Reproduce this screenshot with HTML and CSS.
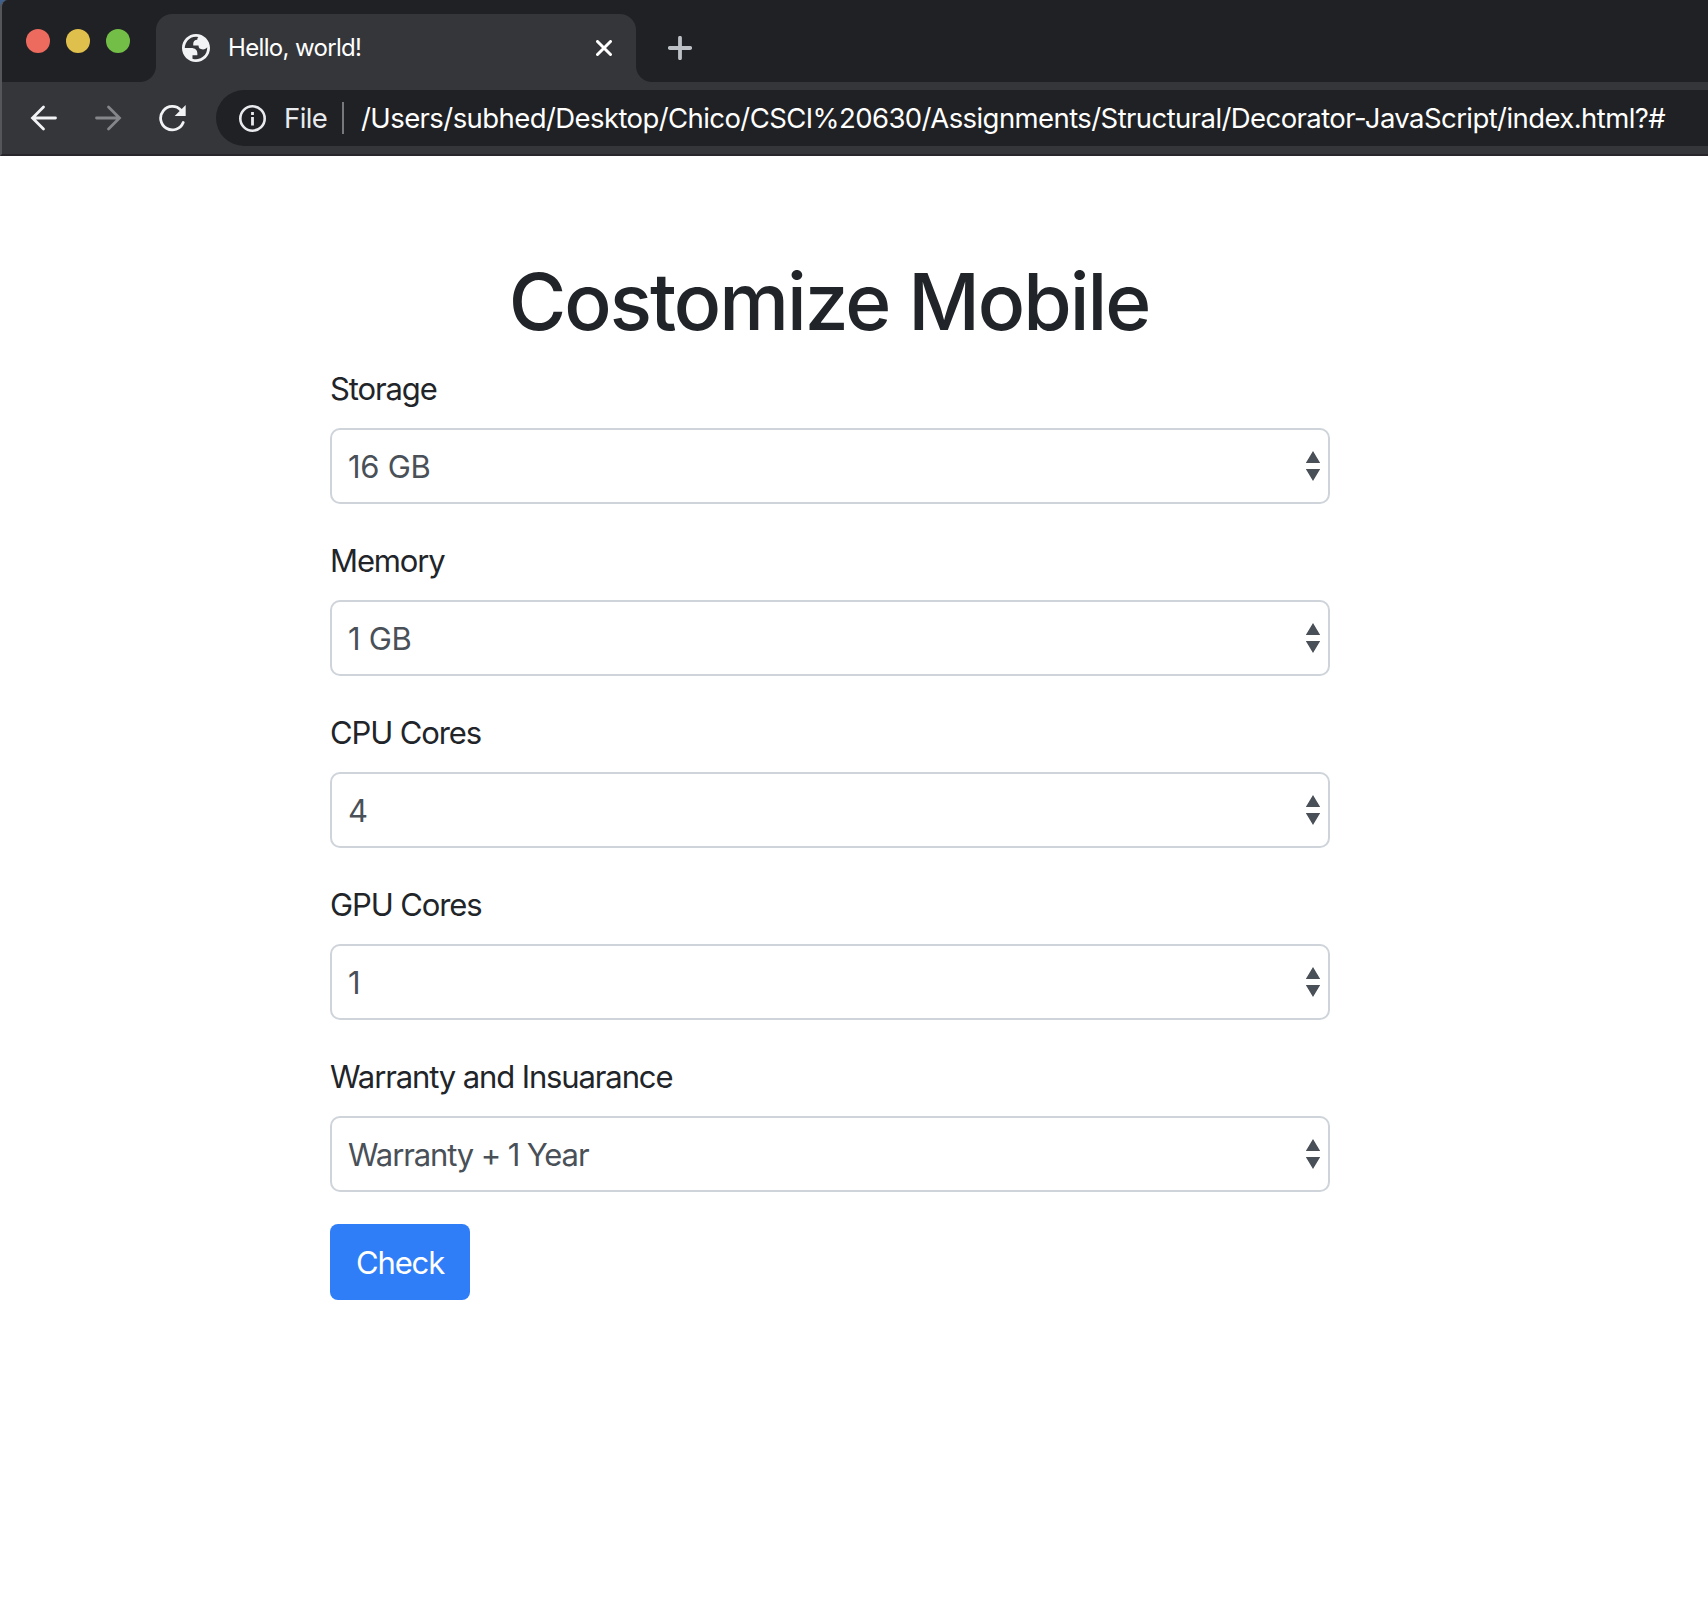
FILE: index.html
```html
<!DOCTYPE html>
<html lang="en">
<head>
<meta charset="utf-8">
<title>Hello, world!</title>
<link rel="stylesheet" href="styles.css">
</head>
<body>
<div class="desktop">
<header class="browser">
  <div class="tabstrip">
    <div class="lights"><i class="light light-red"></i><i class="light light-yellow"></i><i class="light light-green"></i></div>
    <div class="tab">
      <svg class="globe" viewBox="2 2 20 20"><path fill="#f1f3f4" fill-rule="evenodd" d="M12 2C6.480 2 2 6.480 2 12s4.480 10 10 10 10-4.480 10-10S17.520 2 12 2zM4 12h4.400c3.407.022 4.922 1.730 4.543 5.127H9.488v2.470a8.004 8.004 0 0 0 10.498-8.080C19.327 12.506 18.332 13 17 13c-2.137 0-3.206-.916-3.206-2.750h-3.748c-.274-2.728.683-4.092 2.870-4.092 0-.975.327-1.597.811-1.970A8.004 8.004 0 0 0 4 12z"/></svg>
      <span class="tab-title">Hello, world!</span>
      <svg class="close" viewBox="0 0 16 16"><path d="M1.500 1.500 14.500 14.500M14.500 1.500 1.500 14.500" stroke="#fff" stroke-width="3" stroke-linecap="round"/></svg>
    </div>
    <svg class="plus" viewBox="0 0 24 24"><path d="M12 1.800V22.200M1.800 12H22.200" stroke="#bdc1c6" stroke-width="3.800" stroke-linecap="round"/></svg>
  </div>
  <div class="toolbar">
    <svg class="nav" viewBox="0 0 28 28"><path d="M25.500 14H3M13.500 3 2.500 14l11 11" fill="none" stroke="#f1f3f4" stroke-width="2.800" stroke-linecap="round"/></svg>
    <svg class="nav" viewBox="0 0 28 28"><path d="M2.500 14H25M14.500 3l11 11-11 11" fill="none" stroke="#85868a" stroke-width="2.800" stroke-linecap="round"/></svg>
    <svg class="nav" viewBox="-.7 0 28 28"><path d="M24.500 18.500A11.700 11.700 0 1 1 22.300 6.300" fill="none" stroke="#f1f3f4" stroke-width="2.800" stroke-linecap="round"/><path d="M27 1v11H16z" fill="#f1f3f4"/></svg>
    <div class="omnibox">
      <svg class="info" viewBox="-.5 -.5 28 28"><circle cx="14" cy="14" r="12.200" fill="none" stroke="#e8eaed" stroke-width="2.600"/><path d="M12.600 12.500h2.800v8.500h-2.800zM12.600 7.500h2.800v3h-2.800z" fill="#e8eaed"/></svg>
      <span class="scheme">File</span>
      <span class="divider"></span>
      <span class="url">/Users/subhed/Desktop/Chico/CSCI%20630/Assignments/Structural/Decorator-JavaScript/index.html?#</span>
    </div>
  </div>
</header>
</div>
<main class="page">
  <h1>Costomize Mobile</h1>
  <form>
    <div class="field"><label for="storage">Storage</label><select id="storage" class="amount"><option>16 GB</option></select></div>
    <div class="field"><label for="memory">Memory</label><select id="memory" class="amount"><option>1 GB</option></select></div>
    <div class="field"><label for="cpu">CPU Cores</label><select id="cpu" class="amount"><option>4</option></select></div>
    <div class="field"><label for="gpu">GPU Cores</label><select id="gpu" class="amount"><option>1</option></select></div>
    <div class="field"><label for="warranty">Warranty and Insuarance</label><select id="warranty"><option>Warranty + 1 Year</option></select></div>
    <button type="button">Check</button>
  </form>
</main>
</body>
</html>
```
FILE: styles.css
```css
* { box-sizing: border-box; }
body {
  margin: 0;
  background: #fff;
  color: #212529;
  font-family: Inter, "Liberation Sans", sans-serif;
  font-size: 31px;
  font-weight: 440;
  letter-spacing: -1.120px;
}
svg { display: block; flex: none; }

.desktop { background: #3f5f8c; }
.browser {
  height: 156px;
  background: #35363a;
  border-left: 2px solid #55565a;
  border-bottom: 2px solid #28262a;
  border-top-left-radius: 8px;
  overflow: hidden;
}
.tabstrip {
  display: flex;
  height: 82px;
  padding-top: 14px;
  background: #202124;
}
.lights { display: flex; gap: 16px; width: 154px; padding: 15px 0 0 24px; }
.light { width: 24px; height: 24px; border-radius: 50%; }
.light-red { background: #ed6a5e; }
.light-yellow { background: #e0c04c; }
.light-green { background: #72be47; }
.tab {
  position: relative;
  display: flex;
  align-items: center;
  width: 480px;
  height: 68px;
  padding: 0 24px 0 26px;
  background: #35363a;
  border-radius: 16px 16px 0 0;
}
.tab::before, .tab::after {
  content: "";
  position: absolute;
  bottom: 0;
  width: 16px;
  height: 16px;
}
.tab::before { right: 100%; background: radial-gradient(circle at 0 0, #202124 15.500px, #35363a 16.500px); }
.tab::after { left: 100%; background: radial-gradient(circle at 100% 0, #202124 15.500px, #35363a 16.500px); }
.globe { width: 28px; height: 28px; }
.tab-title { margin-left: 18px; padding-bottom: 2px; color: #fff; font-size: 24px; letter-spacing: -0.660px; }
.close { width: 16px; height: 16px; margin-left: auto; }
.plus { width: 24px; height: 24px; margin: 22px 0 0 32px; }

.toolbar { display: flex; align-items: center; height: 72px; padding: 0 0 0 28px; }
.nav { width: 28px; height: 28px; margin-right: 36px; }
.omnibox {
  display: flex;
  flex: 1;
  align-items: center;
  height: 56px;
  margin-left: -6px;
  padding-left: 22px;
  background: #202124;
  border-radius: 28px 0 0 28px;
  font-size: 27.500px;
  letter-spacing: -0.580px;
  white-space: nowrap;
}
.info { width: 28px; height: 28px; }
.scheme { width: 58px; margin-left: 18px; color: #e8eaed; }
.divider { width: 2px; height: 32px; margin-right: 17px; background: #77787b; }
.url { color: #fff; }

.page { width: 1000px; margin: 96px 0 0 330px; }
h1 {
  margin: 0 0 16px;
  padding: 4px 2px 0 0;
  font-size: 78.500px;
  font-weight: 550;
  letter-spacing: -2.030px;
  line-height: 92px;
  text-align: center;
}
.field { margin-bottom: 32px; }
label { display: block; margin-bottom: 16px; padding-top: 2px; line-height: 46px; }
select {
  appearance: none;
  display: block;
  width: 100%;
  height: 76px;
  padding: 0 48px 0 16px;
  border: 2px solid #ced4da;
  border-radius: 10px;
  color: #495057;
  font: inherit;
  letter-spacing: inherit;
  background: #fff url("data:image/svg+xml,%3Csvg xmlns='http://www.w3.org/2000/svg' width='16' height='32' viewBox='0 0 16 32'%3E%3Cpath fill='%23495057' d='M8 1l7.200 12H.8zM8 31L.8 19h14.400z'/%3E%3C/svg%3E") no-repeat right 7px center;
}
select.amount { letter-spacing: -0.300px; }
button {
  display: block;
  width: 140px;
  height: 76px;
  padding: 0;
  border: 0;
  border-radius: 8px;
  background: #2f7ef7;
  color: #fff;
  font: inherit;
  letter-spacing: inherit;
}
```
